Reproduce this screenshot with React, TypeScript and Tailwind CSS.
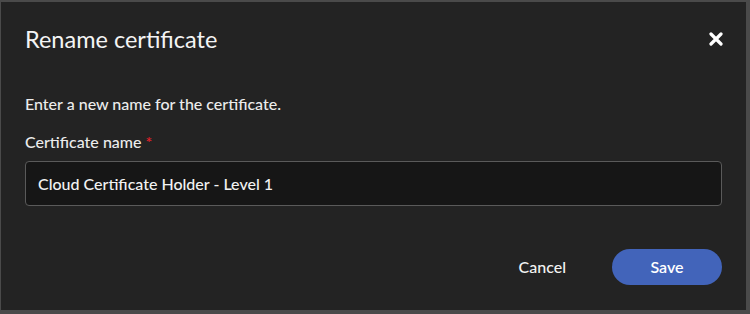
import React, { useState } from 'react';

const App = () => {
  const [name, setName] = useState('Cloud Certificate Holder - Level 1');

  return (
    <div className="w-[750px] h-[314px] bg-[#4a4a4a] pt-[2px] pl-[1px] pr-[4px] pb-[4px] font-['Lato',sans-serif]">
      <div className="h-full bg-[#232323] px-[24px] pt-[22px] flex flex-col">
        {/* Header */}
        <div className="flex items-center justify-between h-[30px]">
          <h2 className="text-[23.5px] leading-[30px] text-[#f4f4f4]">Rename certificate</h2>
          <button className="w-[20px] h-[20px] flex items-center justify-center mr-[-4px]" aria-label="Close">
            <svg width="14" height="14" viewBox="0 0 14 14">
              <path d="M2 2 L12 12 M12 2 L2 12" stroke="#ffffff" strokeWidth="3.2" strokeLinecap="round" />
            </svg>
          </button>
        </div>

        {/* Body */}
        <p className="mt-[39px] text-[16px] leading-[22px] font-medium text-[#ececec]">Enter a new name for the certificate.</p>
        <label className="mt-[16px] text-[16px] leading-[22px] font-medium text-[#ececec]">
          Certificate name <span className="text-[#e5202a]">*</span>
        </label>
        <input
          value={name}
          onChange={(e) => setName(e.target.value)}
          className="mt-[8px] h-[45px] w-full rounded-[4px] border border-[#5a5a5a] bg-[#161616] px-[12px] text-[16px] font-medium text-[#f2f2f2] outline-none"
        />

        {/* Footer */}
        <div className="mt-[43px] flex items-center justify-end gap-[26px]">
          <button className="h-[36px] px-[20px] text-[16px] font-medium text-[#f2f2f2]">Cancel</button>
          <button className="h-[36px] w-[110px] rounded-full bg-[#4264ba] text-[16px] font-semibold text-white">Save</button>
        </div>
      </div>
    </div>
  );
};

export default App;
